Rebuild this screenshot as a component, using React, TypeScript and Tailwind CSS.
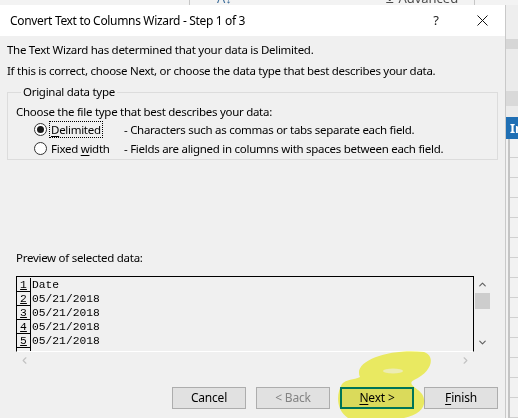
import { ChevronUp, ChevronDown, ChevronLeft, ChevronRight } from "lucide-react";

const rows = ["Date", "05/21/2018", "05/21/2018", "05/21/2018", "05/21/2018", ""];
const gridLines = Array.from({ length: 13 });

function Radio({ checked }: { checked?: boolean }) {
  return (
    <span className="w-[13px] h-[13px] rounded-full border border-[#333] bg-white flex items-center justify-center shrink-0">
      {checked && <span className="w-[7px] h-[7px] rounded-full bg-[#1a1a1a]" />}
    </span>
  );
}

function Button({ label, hot, disabled, isDefault }: { label: string; hot?: number; disabled?: boolean; isDefault?: boolean }) {
  const i = hot ?? -1;
  return (
    <div
      className={
        "w-[74px] h-[22px] flex items-center justify-center bg-[#e1e1e1] " +
        (isDefault ? "border-2 border-[#0078d7]" : "border border-[#adadad]") +
        (disabled ? " text-[#838383]" : " text-black")
      }
    >
      {i >= 0 ? (
        <span>
          {label.slice(0, i)}
          <span className="underline underline-offset-2">{label[i]}</span>
          {label.slice(i + 1)}
        </span>
      ) : (
        label
      )}
    </div>
  );
}

export default function App() {
  return (
    <div className="relative w-[518px] h-[418px] overflow-hidden bg-[#f0f0f0] text-[11.5px] tracking-[-0.28px] text-black font-['Noto_Sans',sans-serif]">
      {/* excel ribbon peeking out above */}
      <div className="h-[5px] bg-[#f3f3f3] flex overflow-hidden text-[13px] tracking-normal leading-[14px] text-[#4b4b4b]">
        <div className="w-[190px] border-r border-[#c6c6c6]" />
        <div className="w-[195px] pl-[27px] -mt-[9px] text-[#3d6d99]">A↓</div>
        <div className="w-[90px] border-r border-[#c6c6c6] -mt-[9px]">⊻ Advanced</div>
      </div>

      <div className="flex h-[413px]">
        {/* dialog */}
        <div className="w-[506px] shrink-0 flex flex-col border-r border-[#c9c9c9] bg-[#f0f0f0]">
          <div className="h-[31px] bg-white flex items-center pl-[10px]">
            <span className="text-[12px] tracking-[-0.33px]">Convert Text to Columns Wizard - Step 1 of 3</span>
            <span className="ml-auto w-[46px] text-center text-[13px] text-[#222]">?</span>
            <span className="w-[46px] flex justify-center">
              <svg width="11" height="11" viewBox="0 0 11 11">
                <path d="M0.5 0.5 L10.5 10.5 M10.5 0.5 L0.5 10.5" stroke="#111" strokeWidth="1" />
              </svg>
            </span>
          </div>

          <div className="pl-[7px] pt-[4px] leading-[20px]">
            <p>The Text Wizard has determined that your data is Delimited.</p>
            <p className="mt-[1px]">If this is correct, choose Next, or choose the data type that best describes your data.</p>
          </div>

          <fieldset className="mx-[7px] mt-[1px] border border-[#dcdcdc] pl-[8px] pb-[1px]">
            <legend className="ml-[5px] px-[2px] leading-[20px]">Original data type</legend>
            <p className="pt-[2px] leading-[16px]">Choose the file type that best describes your data:</p>
            <div className="h-[19px] flex items-center pl-[18px]">
              <Radio checked />
              <span className="w-[77px] pl-[3px]">
                <span className="px-[1px] outline-1 outline-dotted outline-black">
                  <span className="underline underline-offset-2">D</span>elimited
                </span>
              </span>
              <span>- Characters such as commas or tabs separate each field.</span>
            </div>
            <div className="h-[19px] flex items-center pl-[18px]">
              <Radio />
              <span className="w-[77px] pl-[4px]">
                Fixed <span className="underline underline-offset-2">w</span>idth
              </span>
              <span>- Fields are aligned in columns with spaces between each field.</span>
            </div>
          </fieldset>

          <p className="pl-[16px] mt-[88px] leading-[20px]">Preview of selected data:</p>

          <div className="pl-[16px] mt-[8px] flex">
            <div className="w-[458px]">
              <div className="h-[76px] pt-[1px] border-t border-l border-r border-black border-b border-b-white overflow-hidden font-['Liberation_Mono',monospace] text-[11.3px] tracking-normal leading-[13px]">
                {rows.map((r, i) => (
                  <div key={i} className="flex h-[14px]">
                    <div className="w-[14px] pt-[2px] leading-[11px] border-r border-b border-black text-center underline underline-offset-1">{i + 1}</div>
                    <div className="pl-[1px] pt-[2px] leading-[11px]">{r}</div>
                  </div>
                ))}
              </div>
              <div className="h-[16px] flex items-center justify-between px-[3px] text-[#c2c2c2]">
                <ChevronLeft size={11} strokeWidth={2.5} />
                <ChevronRight size={11} strokeWidth={2.5} />
              </div>
            </div>
            <div className="w-[17px] h-[76px] flex flex-col items-center text-[#606060]">
              <ChevronUp size={11} strokeWidth={2.5} className="mt-[3px]" />
              <div className="w-[15px] h-[16px] bg-[#cdcdcd] mt-[3px]" />
              <ChevronDown size={11} strokeWidth={2.5} className="mt-auto mb-[4px]" />
            </div>
          </div>

          <div className="mt-[19px] flex justify-end gap-[10px] pr-[7px] text-[12px] tracking-[-0.2px]">
            <Button label="Cancel" />
            <Button label="< Back" disabled />
            <Button label="Next >" hot={0} isDefault />
            <Button label="Finish" hot={0} />
          </div>
        </div>

        {/* excel sheet behind, on the right */}
        <div className="flex-1 min-w-0 flex flex-col bg-[#f2f2f2]">
          <div className="h-[36px] bg-[#eeeeee]" />
          <div className="h-[11px] bg-[#d6d6d6]" />
          <div className="h-[45px] bg-[#ebebeb]" />
          <div className="h-[16px] bg-[#d9d9d9]" />
          <div className="h-[12px] bg-[#ebebeb]" />
          <div className="h-[23px] bg-[#1f6fb4] text-white font-bold text-[13px] tracking-normal leading-[23px] pl-[4px] overflow-hidden whitespace-nowrap">In</div>
          <div className="flex-1 ml-[2px] border-l-2 border-[#c4c4c4]">
            <div className="h-[19px] border-b border-[#d0d0d0]" />
            {gridLines.map((_, i) => (
              <div key={i} className="h-[20px] border-b border-[#d0d0d0]" />
            ))}
          </div>
        </div>
      </div>

      {/* yellow highlighter scribble around Next */}
      <svg className="absolute left-0 top-0 pointer-events-none mix-blend-multiply" width="518" height="418">
        <path
          d="M360 377 C352 360 392 348 424 352 C436 356 432 372 414 380 C406 384 418 388 422 394 C428 404 422 414 404 418 L348 418 C336 410 336 394 342 384 C346 379 354 380 360 377 Z"
          fill="#f7f75a"
          opacity="0.92"
        />
        <ellipse cx="393" cy="371" rx="10" ry="2.5" fill="#fbfbc8" opacity="0.9" />
      </svg>
    </div>
  );
}
